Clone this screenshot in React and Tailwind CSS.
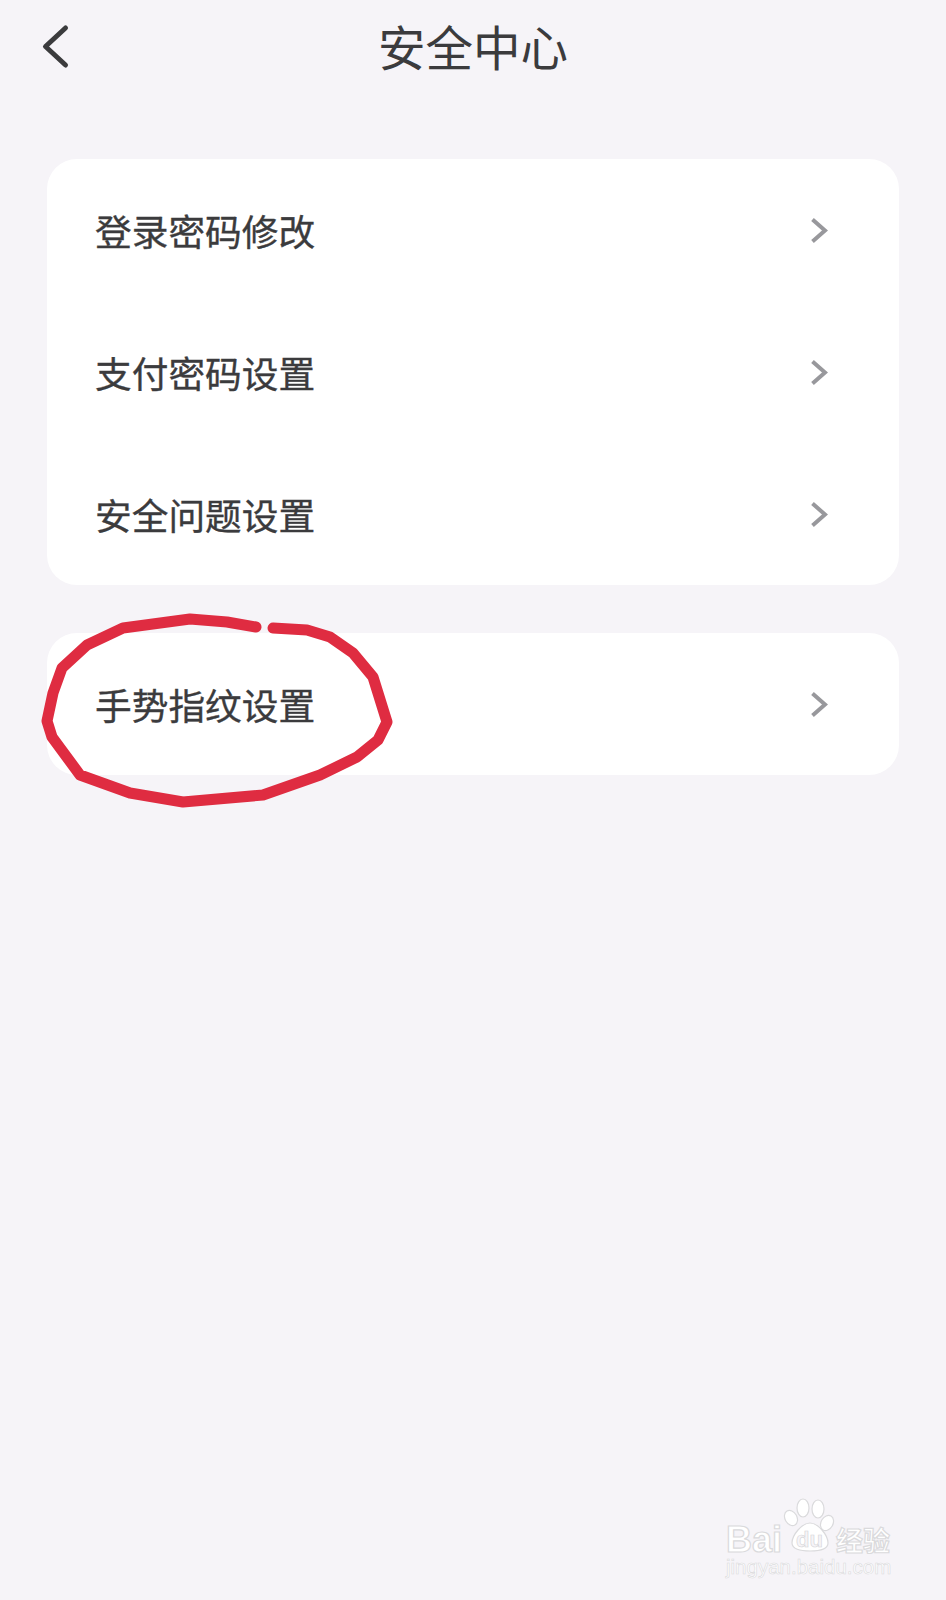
import React from 'react';

const cjk = "font-['Noto_Sans_CJK_SC','Noto_Sans',sans-serif]";

function ChevronRight() {
  return (
    <svg width="18" height="27" viewBox="0 0 18 27" fill="none" className="shrink-0">
      <path d="M2.5 2.5L15 13.5L2.5 24.5" stroke="#98989c" strokeWidth="4" strokeLinejoin="miter" />
    </svg>
  );
}

function Row({ label }) {
  return (
    <div className="flex h-[142px] items-center justify-between pl-[48px] pr-[71px]">
      <span className={`${cjk} text-[36.7px] font-normal leading-none text-[#3b3b3d] [-webkit-text-stroke:0.35px_#3b3b3d]`}>{label}</span>
      <ChevronRight />
    </div>
  );
}

function RedCircle() {
  return (
    <svg className="absolute left-0 top-[600px]" width="420" height="230" viewBox="0 600 420 230" fill="none">
      <path
        d="M256 627 L227 622 L190 619 L123 628 L87 645 L62 668 L53 693 L47 721 L52 737 L80 775 L130 793 L183 802 L263 795 L320 775 L357 757 L378 740 L387 722 L373 677 L353 653 L330 637 L307 630 L273 628"
        stroke="#df2c41"
        strokeWidth="11"
        strokeLinecap="round"
        strokeLinejoin="round"
      />
    </svg>
  );
}

function Watermark() {
  const outline = '[-webkit-text-stroke:1.2px_#dadadc]';
  return (
    <div className="absolute left-[726px] top-[1498px] w-[172px] text-white">
      <div className="flex h-[57px] items-end">
        <span className={`font-['Liberation_Sans',sans-serif] text-[36px] font-bold leading-[30px] ${outline}`}>Bai</span>
        <div className="relative h-[57px] w-[54px] shrink-0">
          <svg width="54" height="57" viewBox="0 0 54 57" className="absolute left-0 top-0">
            <g fill="#ffffff" stroke="#dadadc" strokeWidth="1.2">
              <ellipse cx="9" cy="20" rx="6" ry="8" transform="rotate(-30 9 20)" />
              <ellipse cx="21" cy="10" rx="6" ry="9" />
              <ellipse cx="36" cy="11" rx="6" ry="9" />
              <ellipse cx="45" cy="25" rx="6" ry="8" transform="rotate(30 45 25)" />
              <path d="M28 25C36 25 46 37 46 45C46 51 38 53 28 53C18 53 10 51 10 45C10 37 20 25 28 25Z" />
            </g>
          </svg>
          <span className="absolute left-[14px] top-[31px] font-['Liberation_Sans',sans-serif] text-[22px] font-bold leading-[22px] text-[#f6f4f8] [-webkit-text-stroke:0.6px_#d4d4d6]">du</span>
        </div>
        <span className={`${cjk} text-[27px] font-bold leading-[30px] ${outline}`}>经验</span>
      </div>
      <div className="font-['Liberation_Sans',sans-serif] text-[20.5px] leading-[24px] whitespace-nowrap [-webkit-text-stroke:0.6px_#dadadc]">jingyan.baidu.com</div>
    </div>
  );
}

export default function App() {
  return (
    <div className="relative h-[1600px] w-[946px] overflow-hidden bg-[#f6f4f8]">
      <header className="relative flex h-[97px] items-center justify-center pb-[5px]">
        <svg width="30" height="46" viewBox="0 0 30 46" fill="none" className="absolute left-[41px] top-[24px]">
          <path d="M24.5 4L4.5 22.5L24.5 41" stroke="#3b3b3d" strokeWidth="5" strokeLinecap="round" strokeLinejoin="round" />
        </svg>
        <h1 className={`${cjk} text-[47.5px] font-normal leading-none text-[#3b3b3d]`}>安全中心</h1>
      </header>

      <main className="flex flex-col gap-[48px] px-[47px] pt-[62px]">
        <section className="rounded-[30px] bg-white">
          <Row label="登录密码修改" />
          <Row label="支付密码设置" />
          <Row label="安全问题设置" />
        </section>
        <section className="rounded-[30px] bg-white">
          <Row label="手势指纹设置" />
        </section>
      </main>

      <RedCircle />
      <Watermark />
    </div>
  );
}
